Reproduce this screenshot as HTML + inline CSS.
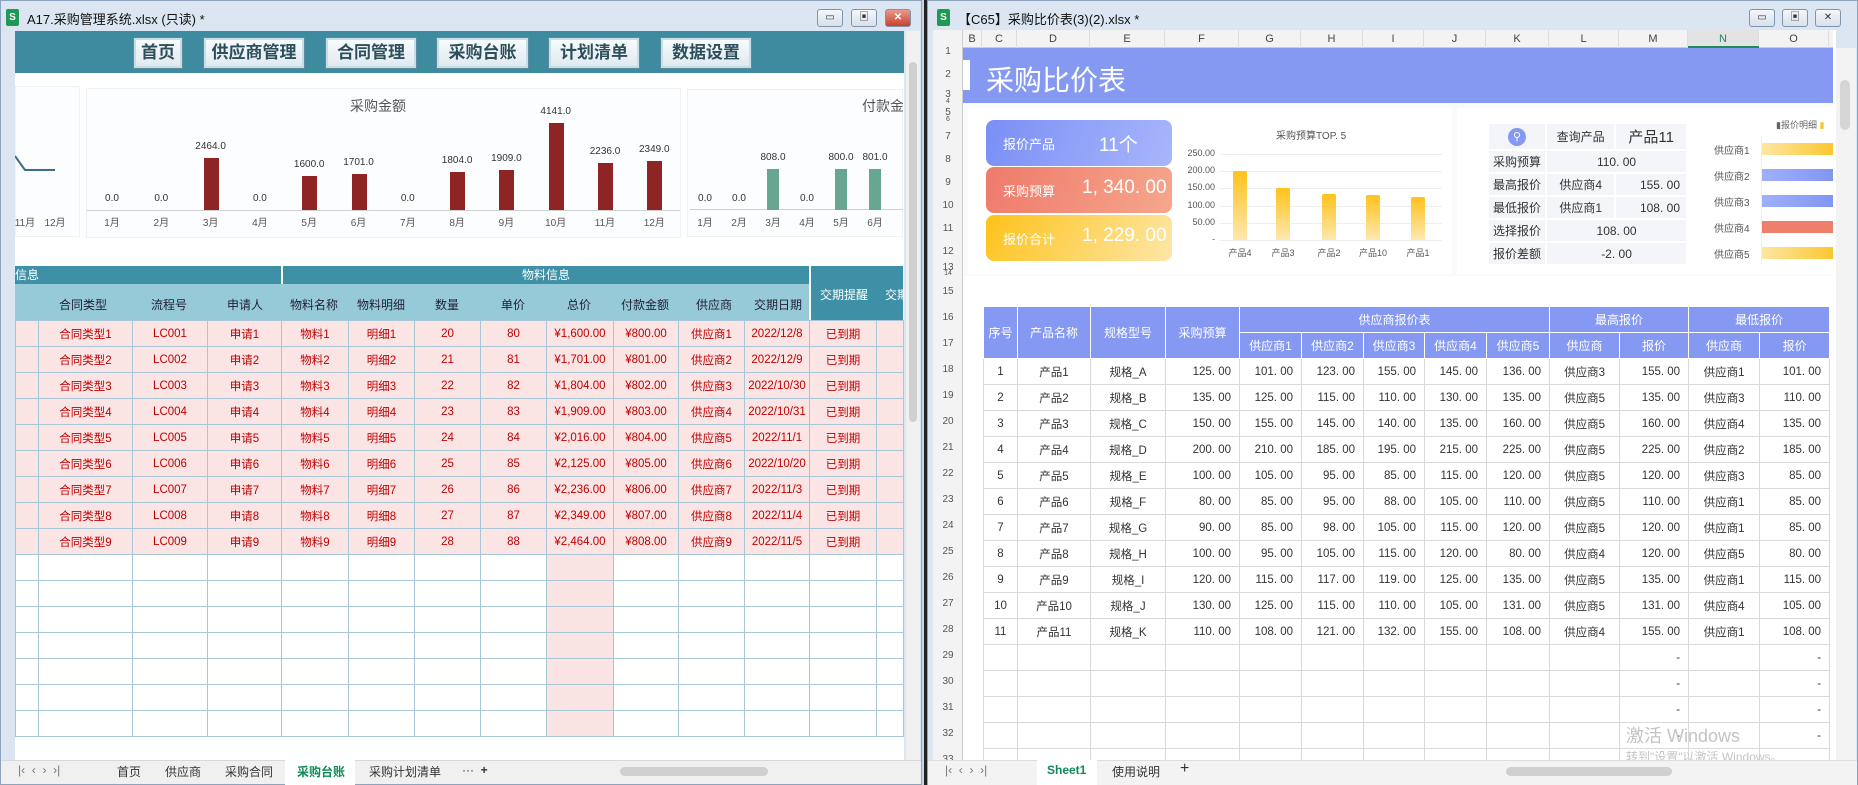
<!DOCTYPE html>
<html><head><meta charset="utf-8">
<style>
*{margin:0;padding:0;box-sizing:border-box}
body{width:1858px;height:785px;overflow:hidden;background:#c9d7e6;font-family:"Liberation Sans","Noto Sans CJK SC",sans-serif;position:relative}
.a{position:absolute}
.win{position:absolute;background:#dbe6f2;border:1px solid #8ea4bd}
.tt{font-size:13px;color:#111;top:9px}
.ctl{position:absolute;top:9px;width:26px;height:18px;border:1px solid #7f93ab;border-radius:3px;background:linear-gradient(#f4f7fb,#d7e0ea);font-size:10px;text-align:center;line-height:16px;color:#333}
.ico{position:absolute;top:9px;width:13px;height:17px;background:#1e9a55;border-radius:2px;color:#fff;font-size:10px;font-weight:bold;text-align:center;line-height:17px}
.btn{position:absolute;top:38px;height:30px;background:linear-gradient(#f7fbfd,#dfeaf0);border:2px solid #c9dde6;outline:1px solid #5b8d9c;font-size:17px;font-weight:bold;color:#2d4f5b;text-align:center;line-height:26px}
.mo{position:absolute;top:214px;font-size:10px;color:#555;width:30px;text-align:center}
.vl{position:absolute;font-size:10px;color:#333;width:40px;text-align:center}
.bar{position:absolute;width:15px;background:#8e2424}
.gbar{position:absolute;width:12px;background:#67a690}
table{border-collapse:collapse;table-layout:fixed;position:absolute}
.lt td{height:26px;border:1px solid #a9c6d6;text-align:center;font-size:11.5px;color:#c00000;white-space:nowrap;overflow:hidden}
.lt tr.d td{background:#fbe4e4}
.lt tr.e td{background:#fff}
.lt tr.e td.pk{background:#f9e3e3}
.rt td{border:1px solid #d9d9d9;font-size:11.5px;color:#333;text-align:center;white-space:nowrap;height:26px}
.rt td.n{text-align:right;padding-right:8px}
.rt th{background:#8599f3;color:#fff;font-weight:normal;font-size:12px;border:1px solid #fff;height:26px}
.rn{position:absolute;left:933px;width:30px;text-align:center;font-size:10px;color:#555}
.cl{position:absolute;top:30px;height:18px;font-size:11px;color:#444;text-align:center;line-height:18px;border-right:1px solid #ddd}
.card{position:absolute;left:986px;width:186px;height:46px;border-radius:8px;color:#fff;white-space:nowrap}
.card span{position:absolute;top:14px;font-size:13px}
.card b{position:absolute;top:10px;font-size:19px;font-weight:normal;white-space:nowrap}
.q td{background:#f3f5f9;border:2px solid #fff;font-size:12px;color:#333;height:23px;text-align:center}
.tab{position:absolute;top:763px;font-size:12px;color:#333}
</style></head><body>

<!-- LEFT WINDOW -->
<div class="win" style="left:0;top:0;width:922px;height:785px"></div>
<div class="ico" style="left:6px">S</div>
<div class="a tt" style="left:27px">A17.采购管理系统.xlsx (只读) *</div>
<div class="ctl" style="left:817px">▭</div><div class="ctl" style="left:851px">▣</div>
<div class="ctl" style="left:885px;background:linear-gradient(#e99a8a,#c8412d);color:#fff;font-weight:bold">✕</div>
<div class="a" style="left:15px;top:31px;width:889px;height:729px;background:#fff"></div>
<div class="a" style="left:15px;top:31px;width:889px;height:42px;background:#3e8a9e"></div>
<div class="btn" style="left:134px;width:48px">首页</div>
<div class="btn" style="left:204px;width:100px">供应商管理</div>
<div class="btn" style="left:326px;width:90px">合同管理</div>
<div class="btn" style="left:437px;width:91px">采购台账</div>
<div class="btn" style="left:549px;width:90px">计划清单</div>
<div class="btn" style="left:661px;width:90px">数据设置</div>

<div class="a" style="left:15px;top:86px;width:65px;height:151px;border:1px solid #eef2f4;background:#fbfdfe"></div>
<svg class="a" style="left:15px;top:150px" width="45" height="30"><polyline points="0,6 10,20 40,20" fill="none" stroke="#3d6e86" stroke-width="2"/></svg>
<div class="mo" style="left:10px">11月</div><div class="mo" style="left:40px">12月</div>
<div class="a" style="left:86px;top:88px;width:595px;height:150px;border:1px solid #eef2f4;background:#fbfdfe"></div>
<div class="a" style="left:350px;top:96px;font-size:14px;color:#555">采购金额</div>
<div class="a" style="left:87px;top:210px;width:593px;height:1px;background:#d0d0d0"></div>
<div class="a" style="left:687px;top:89px;width:216px;height:148px;border:1px solid #eef2f4;background:#fbfdfe"></div>
<div class="a" style="left:862px;top:96px;font-size:14px;color:#555;width:41px;overflow:hidden;white-space:nowrap">付款金额</div>
<div class="a" style="left:690px;top:209px;width:213px;height:1px;background:#d0d0d0"></div>
<div id="lc"></div>

<div class="a" style="left:15px;top:266px;width:266px;height:18px;background:#3e90a6;color:#fff;font-size:12px;line-height:18px;padding-left:0">信息</div>
<div class="a" style="left:283px;top:266px;width:526px;height:18px;background:#3e90a6;color:#fff;font-size:12px;line-height:18px;text-align:center">物料信息</div>
<div class="a" style="left:811px;top:266px;width:92px;height:54px;background:#3e90a6"></div>
<div class="a" style="left:15px;top:284px;width:794px;height:36px;background:#97cad8"></div>
<div class="a" style="left:820px;top:286px;font-size:12px;color:#fff">交期提醒</div>
<div class="a" style="left:885px;top:286px;font-size:12px;color:#fff;width:18px;overflow:hidden;white-space:nowrap">交期</div>
<div class="a" style="left:15px;top:284px;width:794px;height:36px;font-size:12px;color:#223">
<span class="a" style="left:44px;top:12px">合同类型</span><span class="a" style="left:136px;top:12px">流程号</span><span class="a" style="left:212px;top:12px">申请人</span><span class="a" style="left:275px;top:12px">物料名称</span><span class="a" style="left:342px;top:12px">物料明细</span><span class="a" style="left:420px;top:12px">数量</span><span class="a" style="left:486px;top:12px">单价</span><span class="a" style="left:552px;top:12px">总价</span><span class="a" style="left:606px;top:12px">付款金额</span><span class="a" style="left:681px;top:12px">供应商</span><span class="a" style="left:739px;top:12px">交期日期</span></div>
<table class="lt" style="left:15px;top:320px;width:888px" id="lt">
<colgroup><col style="width:23px"><col style="width:94px"><col style="width:75px"><col style="width:74px"><col style="width:67px"><col style="width:66px"><col style="width:66px"><col style="width:66px"><col style="width:67px"><col style="width:65px"><col style="width:66px"><col style="width:65px"><col style="width:67px"><col style="width:27px"></colgroup>
<tbody id="ltb"></tbody></table>
<div class="a" style="left:906px;top:31px;width:14px;height:729px;background:#f0f0f0"></div>
<div class="a" style="left:909px;top:62px;width:8px;height:360px;background:#d0d0d0;border-radius:4px"></div>
<div class="a" style="left:1px;top:760px;width:920px;height:24px;background:#f0f0f0;border-top:1px solid #d8d8d8"></div>
<div class="tab" style="left:18px;color:#777">|‹ &nbsp;‹ &nbsp;› &nbsp;›|</div>
<div class="tab" style="left:117px">首页</div><div class="tab" style="left:165px">供应商</div><div class="tab" style="left:225px">采购合同</div>
<div class="a" style="left:285px;top:760px;width:70px;height:25px;background:#fff"></div>
<div class="tab" style="left:297px;color:#0f8a55;font-weight:bold">采购台账</div><div class="tab" style="left:369px">采购计划清单</div>
<div class="tab" style="left:462px">··· &nbsp;<b>+</b></div>
<div class="a" style="left:620px;top:767px;width:148px;height:9px;background:#d0d0d0;border-radius:5px"></div>

<div class="a" style="left:924px;top:0;width:3px;height:785px;background:#222"></div>

<!-- RIGHT WINDOW -->
<div class="win" style="left:927px;top:0;width:931px;height:785px"></div>
<div class="ico" style="left:937px">S</div>
<div class="a tt" style="left:958px">【C65】采购比价表(3)(2).xlsx *</div>
<div class="ctl" style="left:1749px">▭</div><div class="ctl" style="left:1782px">▣</div><div class="ctl" style="left:1815px">✕</div>
<div class="a" style="left:933px;top:30px;width:903px;height:730px;background:#fff"></div>
<div class="a" style="left:933px;top:30px;width:903px;height:18px;background:#f3f3f3;border-bottom:1px solid #ccc"></div>
<div class="a" style="left:933px;top:30px;width:30px;height:730px;background:#f3f3f3;border-right:1px solid #ccc"></div>
<div id="cols"></div><div id="rows"></div>
<div class="a" style="left:1688px;top:46px;width:71px;height:2px;background:#1e8a55"></div>
<div class="a" style="left:963px;top:48px;width:870px;height:55px;background:#8599f3"></div>
<div class="a" style="left:963px;top:60px;width:7px;height:30px;background:#fff"></div>
<div class="a" style="left:986px;top:59px;font-size:28px;color:#fff">采购比价表</div>
<div class="a" style="left:963px;top:103px;width:870px;height:173px;background:#fafafa"></div>
<div class="a" style="left:968px;top:108px;width:484px;height:166px;background:#fff"></div>
<div class="a" style="left:1457px;top:108px;width:376px;height:166px;background:#fff"></div>
<div class="card" style="top:120px;background:linear-gradient(110deg,#7a8ff5,#a8b6fb)"><span style="left:17px">报价产品</span><b style="left:113px">11个</b></div>
<div class="card" style="top:167px;background:linear-gradient(110deg,#ee7a6b,#f6a68c)"><span style="left:17px">采购预算</span><b style="left:96px">1, 340. 00</b></div>
<div class="card" style="top:215px;background:linear-gradient(120deg,#fec21a,#fde7a8)"><span style="left:17px">报价合计</span><b style="left:96px">1, 229. 00</b></div>
<div class="a" style="left:1276px;top:127px;font-size:10px;color:#555">采购预算TOP. 5</div>
<div id="mc"></div>
<table class="q" style="left:1487px;top:122px;width:201px">
<tr><td style="width:47px;height:27px"><span style="display:inline-block;width:18px;height:18px;border-radius:9px;background:#8599f3;color:#fff;font-size:11px;line-height:18px">⚲</span></td><td style="width:56px">查询产品</td><td style="width:58px;font-size:15px">产品11</td></tr>
<tr><td>采购预算</td><td colspan="2">110. 00</td></tr>
<tr><td>最高报价</td><td>供应商4</td><td style="text-align:right;padding-right:6px">155. 00</td></tr>
<tr><td>最低报价</td><td>供应商1</td><td style="text-align:right;padding-right:6px">108. 00</td></tr>
<tr><td>选择报价</td><td colspan="2">108. 00</td></tr>
<tr><td>报价差额</td><td colspan="2">-2. 00</td></tr></table>
<div class="a" style="left:1776px;top:118px;font-size:9px;color:#666">▮报价明细 <span style="color:#f8c630">▮</span></div>
<div id="hb"></div>

<table class="rt" style="left:983px;top:306px;width:846px">
<colgroup><col style="width:34px"><col style="width:73px"><col style="width:75px"><col style="width:74px"><col style="width:62px"><col style="width:62px"><col style="width:61px"><col style="width:62px"><col style="width:63px"><col style="width:70px"><col style="width:69px"><col style="width:71px"><col style="width:70px"></colgroup>
<tr><th rowspan="2">序号</th><th rowspan="2">产品名称</th><th rowspan="2">规格型号</th><th rowspan="2">采购预算</th><th colspan="5">供应商报价表</th><th colspan="2">最高报价</th><th colspan="2">最低报价</th></tr>
<tr><th>供应商1</th><th>供应商2</th><th>供应商3</th><th>供应商4</th><th>供应商5</th><th>供应商</th><th>报价</th><th>供应商</th><th>报价</th></tr>
<tbody id="rtb"></tbody></table>
<div class="a" style="left:1833px;top:30px;width:3px;height:730px;background:#fff"></div>
<div class="a" style="left:1836px;top:48px;width:20px;height:712px;background:#f3f3f3"></div>
<div class="a" style="left:1840px;top:80px;width:10px;height:50px;background:#d5d5d5;border-radius:5px"></div>
<div class="a" style="left:1626px;top:722px;font-size:18px;color:#c4c4c4">激活 Windows</div>
<div class="a" style="left:1626px;top:748px;font-size:12px;color:#c4c4c4">转到"设置"以激活 Windows。</div>
<div class="a" style="left:928px;top:760px;width:929px;height:25px;background:#f3f3f3;border-top:1px solid #ddd"></div>
<div class="tab" style="left:945px;color:#777">|‹ &nbsp;‹ &nbsp;› &nbsp;›|</div>
<div class="a" style="left:1037px;top:760px;width:60px;height:25px;background:#fff"></div>
<div class="tab" style="left:1047px;color:#0f8a55;font-weight:bold">Sheet1</div>
<div class="tab" style="left:1112px">使用说明</div><div class="tab" style="left:1180px;font-size:16px;top:760px">+</div>
<div class="a" style="left:1506px;top:767px;width:166px;height:9px;background:#d0d0d0;border-radius:5px"></div>

<script>
function h(id,s){document.getElementById(id).innerHTML=s}
var v=[0,0,2464,0,1600,1701,0,1804,1909,4141,2236,2349],s='';
for(var i=0;i<12;i++){var cx=112+i*49.3,hh=v[i]*87/4141;
s+='<div class="mo" style="left:'+(cx-15)+'px">'+(i+1)+'月</div>';
if(hh>0)s+='<div class="bar" style="left:'+(cx-7)+'px;top:'+(210-hh)+'px;height:'+hh+'px"></div>';
s+='<div class="vl" style="left:'+(cx-20)+'px;top:'+(210-hh-17)+'px">'+v[i].toFixed(1)+'</div>';}
var g=[0,0,808,0,800,801];
for(i=0;i<6;i++){var cx=705+i*34,hh=g[i]*41/808;
s+='<div class="mo" style="left:'+(cx-15)+'px">'+(i+1)+'月</div>';
if(hh>0)s+='<div class="gbar" style="left:'+(cx-6)+'px;top:'+(210-hh)+'px;height:'+hh+'px"></div>';
s+='<div class="vl" style="left:'+(cx-20)+'px;top:'+(210-hh-17)+'px">'+g[i].toFixed(1)+'</div>';}
h('lc',s);
var tot=[1600,1701,1804,1909,2016,2125,2236,2349,2464],dt=['12/8','12/9','10/30','10/31','11/1','10/20','11/3','11/4','11/5'];
s='';for(i=1;i<=9;i++){var t=tot[i-1];var ts='¥'+Math.floor(t/1000)+','+String(t%1000).padStart(3,'0')+'.00';
s+='<tr class="d"><td></td><td>合同类型'+i+'</td><td>LC00'+i+'</td><td>申请'+i+'</td><td>物料'+i+'</td><td>明细'+i+'</td><td>'+(19+i)+'</td><td>'+(79+i)+'</td><td>'+ts+'</td><td>¥'+(799+i)+'.00</td><td>供应商'+i+'</td><td>2022/'+dt[i-1]+'</td><td>已到期</td><td></td></tr>';}
for(i=0;i<7;i++){s+='<tr class="e">';for(var j=0;j<14;j++)s+='<td'+(j==8?' class="pk"':'')+'></td>';s+='</tr>';}
h('ltb',s);
var cb=[963,982,1017,1090,1165,1239,1301,1363,1424,1486,1549,1619,1688,1759,1829],cn='BCDEFGHIJKLMNO';s='';
for(i=0;i<14;i++)s+='<div class="cl" style="left:'+cb[i]+'px;width:'+(cb[i+1]-cb[i])+'px'+(i==12?';background:#e3e3e3;color:#1e8a55':'')+'">'+cn[i]+'</div>';
h('cols',s);
var ry={1:52,2:75,3:95,4:104,5:113,6:122,7:137,8:160,9:183,10:206,11:229,12:252,13:268,14:276};s='';
for(var k in ry)s+='<div class="rn" style="top:'+(ry[k]-6)+'px;font-size:'+(k==4||k==6||k==14?7:10)+'px">'+k+'</div>';
for(i=15;i<=33;i++)s+='<div class="rn" style="top:'+(286+(i-15)*26)+'px">'+i+'</div>';
h('rows',s);
s='';var yl=['250.00','200.00','150.00','100.00','50.00','-'];
for(i=0;i<6;i++){var y=154+i*17.2;s+='<div class="a" style="left:1185px;top:'+(y-6)+'px;width:30px;text-align:right;font-size:9px;color:#555">'+yl[i]+'</div><div class="a" style="left:1220px;top:'+y+'px;width:222px;height:1px;background:#eee"></div>';}
var mb=[[1233,200,'产品4'],[1276,150,'产品3'],[1322,135,'产品2'],[1366,130,'产品10'],[1411,125,'产品1']];
for(i=0;i<5;i++){var hh=mb[i][1]*86/250;s+='<div class="a" style="left:'+mb[i][0]+'px;top:'+(240-hh)+'px;width:14px;height:'+hh+'px;border-radius:2px 2px 0 0;background:linear-gradient(#fec21a,#fee8b0)"></div><div class="a" style="left:'+(mb[i][0]-13)+'px;top:246px;width:40px;text-align:center;font-size:9px;color:#555">'+mb[i][2]+'</div>';}
h('mc',s);
s='';var hc=['linear-gradient(90deg,#fde7a0,#fcc630)','linear-gradient(90deg,#9fb0fa,#8196f2)','linear-gradient(90deg,#9fb0fa,#8196f2)','#ee7f6d','linear-gradient(90deg,#fde7a0,#fcc630)'];
for(i=0;i<5;i++){var y=149+i*26;s+='<div class="a" style="left:1714px;top:'+(y-7)+'px;font-size:10px;color:#555">供应商'+(i+1)+'</div><div class="a" style="left:1762px;top:'+(y-6)+'px;width:71px;height:12px;background:'+hc[i]+'"></div>';}
s+='<div class="a" style="left:1761px;top:136px;width:1px;height:128px;background:#eee"></div>';
h('hb',s);
var d=[[125,101,123,155,145,136,3,155,1,101],[135,125,115,110,130,135,5,135,3,110],[150,155,145,140,135,160,5,160,4,135],[200,210,185,195,215,225,5,225,2,185],[100,105,95,85,115,120,5,120,3,85],[80,85,95,88,105,110,5,110,1,85],[90,85,98,105,115,120,5,120,1,85],[100,95,105,115,120,80,4,120,5,80],[120,115,117,119,125,135,5,135,1,115],[130,125,115,110,105,131,5,131,4,105],[110,108,121,132,155,108,4,155,1,108]];
var sp='ABCDEFGHIJK';s='';function f(x){return x.toFixed(2).replace('.','. ')}
for(i=0;i<11;i++){var r=d[i];s+='<tr><td>'+(i+1)+'</td><td>产品'+(i+1)+'</td><td>规格_'+sp[i]+'</td>';
for(var j=0;j<6;j++)s+='<td class="n">'+f(r[j])+'</td>';
s+='<td>供应商'+r[6]+'</td><td class="n">'+f(r[7])+'</td><td>供应商'+r[8]+'</td><td class="n">'+f(r[9])+'</td></tr>';}
for(i=0;i<5;i++){s+='<tr>';for(j=0;j<13;j++)s+='<td'+((j==10||j==12)&&i<4?' class="n"':'')+'>'+((j==10||j==12)&&i<4?'-':'')+'</td>';s+='</tr>';}
h('rtb',s);
</script>
</body></html>
